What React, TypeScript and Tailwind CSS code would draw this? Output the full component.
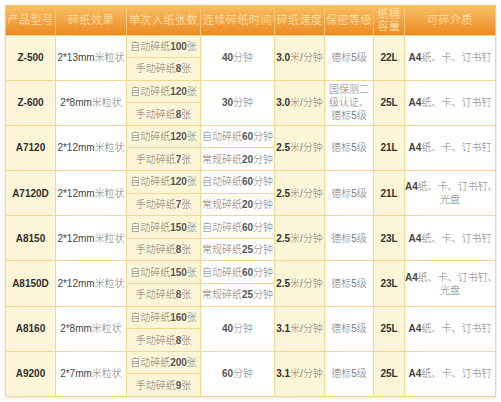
import React from 'react';

type Row = {
  model: string;
  effect: string;
  auto: string;
  manual: string;
  time: string[];
  speed: string;
  level: string[];
  cap: string;
  media: string[];
};

const rows: Row[] = [
  { model: 'Z-500', effect: '2*13mm米粒状', auto: '自动碎纸100张', manual: '手动碎纸8张', time: ['40分钟'], speed: '3.0米/分钟', level: ['德标5级'], cap: '22L', media: ['A4纸、卡、订书钉'] },
  { model: 'Z-600', effect: '2*8mm米粒状', auto: '自动碎纸120张', manual: '手动碎纸8张', time: ['30分钟'], speed: '3.0米/分钟', level: ['国保测二', '级认证、', '德标5级'], cap: '25L', media: ['A4纸、卡、订书钉'] },
  { model: 'A7120', effect: '2*12mm米粒状', auto: '自动碎纸120张', manual: '手动碎纸7张', time: ['自动碎纸60分钟', '常规碎纸20分钟'], speed: '2.5米/分钟', level: ['德标5级'], cap: '21L', media: ['A4纸、卡、订书钉'] },
  { model: 'A7120D', effect: '2*12mm米粒状', auto: '自动碎纸120张', manual: '手动碎纸7张', time: ['自动碎纸60分钟', '常规碎纸20分钟'], speed: '2.5米/分钟', level: ['德标5级'], cap: '21L', media: ['A4纸、卡、订书钉、', '光盘'] },
  { model: 'A8150', effect: '2*12mm米粒状', auto: '自动碎纸150张', manual: '手动碎纸8张', time: ['自动碎纸60分钟', '常规碎纸25分钟'], speed: '2.5米/分钟', level: ['德标5级'], cap: '23L', media: ['A4纸、卡、订书钉'] },
  { model: 'A8150D', effect: '2*12mm米粒状', auto: '自动碎纸150张', manual: '手动碎纸8张', time: ['自动碎纸60分钟', '常规碎纸25分钟'], speed: '2.5米/分钟', level: ['德标5级'], cap: '23L', media: ['A4纸、卡、订书钉、', '光盘'] },
  { model: 'A8160', effect: '2*8mm米粒状', auto: '自动碎纸160张', manual: '手动碎纸8张', time: ['40分钟'], speed: '3.1米/分钟', level: ['德标5级'], cap: '25L', media: ['A4纸、卡、订书钉'] },
  { model: 'A9200', effect: '2*7mm米粒状', auto: '自动碎纸200张', manual: '手动碎纸9张', time: ['60分钟'], speed: '3.1米/分钟', level: ['德标5级'], cap: '25L', media: ['A4纸、卡、订书钉'] },
];

const headers = ['产品型号', '碎纸效果', '单次入纸张数', '连续碎纸时间', '碎纸速度', '保密等级', '纸桶容量', '可碎介质'];
const widths = [50, 71, 74, 74, 50, 49, 31, 91];

// letters and digits get their own look (darker, often bolder) like the original's Calibri runs
const Mixed = ({ s, latin = 'font-bold text-[#555]' }: { s: string; latin?: string }) => (
  <>
    {s.split(/([A-Za-z0-9.*\-]+)/).filter(Boolean).map((part, i) =>
      /^[A-Za-z0-9.*\-]+$/.test(part) ? (
        <span key={i} className={latin}>{part}</span>
      ) : (
        <span key={i}>{part}</span>
      )
    )}
  </>
);

const cell = 'border border-[#f1d98f] text-center align-middle p-0 text-[10px] leading-[13px] text-[#7a7a7a] font-light';
const yellow = 'bg-[#fdf5d8]';

export default function App() {
  return (
    <div className="w-[501px] h-[402px] bg-white p-[5px]" style={{ fontFamily: '"Liberation Sans", "Noto Sans CJK SC", sans-serif' }}>
      <table className="table-fixed border-collapse w-[490px] shadow-[0_1px_3px_rgba(0,0,0,0.12)]">
        <colgroup>
          {widths.map((w, i) => (
            <col key={i} style={{ width: w }} />
          ))}
        </colgroup>
        <thead>
          <tr className="h-[30px]">
            {headers.map((h, i) => (
              <th
                key={h}
                className="bg-linear-to-b from-[#f9c066] to-[#ec8a1b] border-x border-[#f7c877] border-t-0 p-0 text-[11px] leading-[12px] font-light text-[#ffeec4] tracking-[0.5px]"
              >
                {i === 6 ? (
                  <>
                    纸桶
                    <br />
                    容量
                  </>
                ) : (
                  h
                )}
              </th>
            ))}
          </tr>
        </thead>
        <tbody>
          {rows.map((r) => {
            const split = r.time.length > 1;
            return (
              <React.Fragment key={r.model}>
                <tr className="h-[22.6px]">
                  <td rowSpan={2} className={`${cell} ${yellow} !font-bold text-[9px] !text-[#2f2f2f]`}>
                    {r.model}
                  </td>
                  <td rowSpan={2} className={cell}>
                    <Mixed s={r.effect} latin="font-normal text-[#444]" />
                  </td>
                  <td className={`${cell} ${yellow}`}>
                    <Mixed s={r.auto} />
                  </td>
                  {split ? (
                    <td className={cell}>
                      <Mixed s={r.time[0]} />
                    </td>
                  ) : (
                    <td rowSpan={2} className={cell}>
                      <Mixed s={r.time[0]} />
                    </td>
                  )}
                  <td rowSpan={2} className={`${cell} ${yellow}`}>
                    <Mixed s={r.speed} latin="font-bold text-[#333]" />
                  </td>
                  <td rowSpan={2} className={cell}>
                    {r.level.map((l, i) => (
                      <div key={i}>
                        <Mixed s={l} latin="font-normal text-[#777]" />
                      </div>
                    ))}
                  </td>
                  <td rowSpan={2} className={`${cell} ${yellow} !font-bold text-[9px] !text-[#333]`}>
                    {r.cap}
                  </td>
                  <td rowSpan={2} className={cell}>
                    {r.media.map((m, i) => (
                      <div key={i} className="whitespace-nowrap">
                        <Mixed s={m} latin="font-bold text-[#444]" />
                      </div>
                    ))}
                  </td>
                </tr>
                <tr className="h-[22.6px]">
                  <td className={`${cell} ${yellow}`}>
                    <Mixed s={r.manual} />
                  </td>
                  {split && (
                    <td className={cell}>
                      <Mixed s={r.time[1]} />
                    </td>
                  )}
                </tr>
              </React.Fragment>
            );
          })}
        </tbody>
      </table>
    </div>
  );
}
